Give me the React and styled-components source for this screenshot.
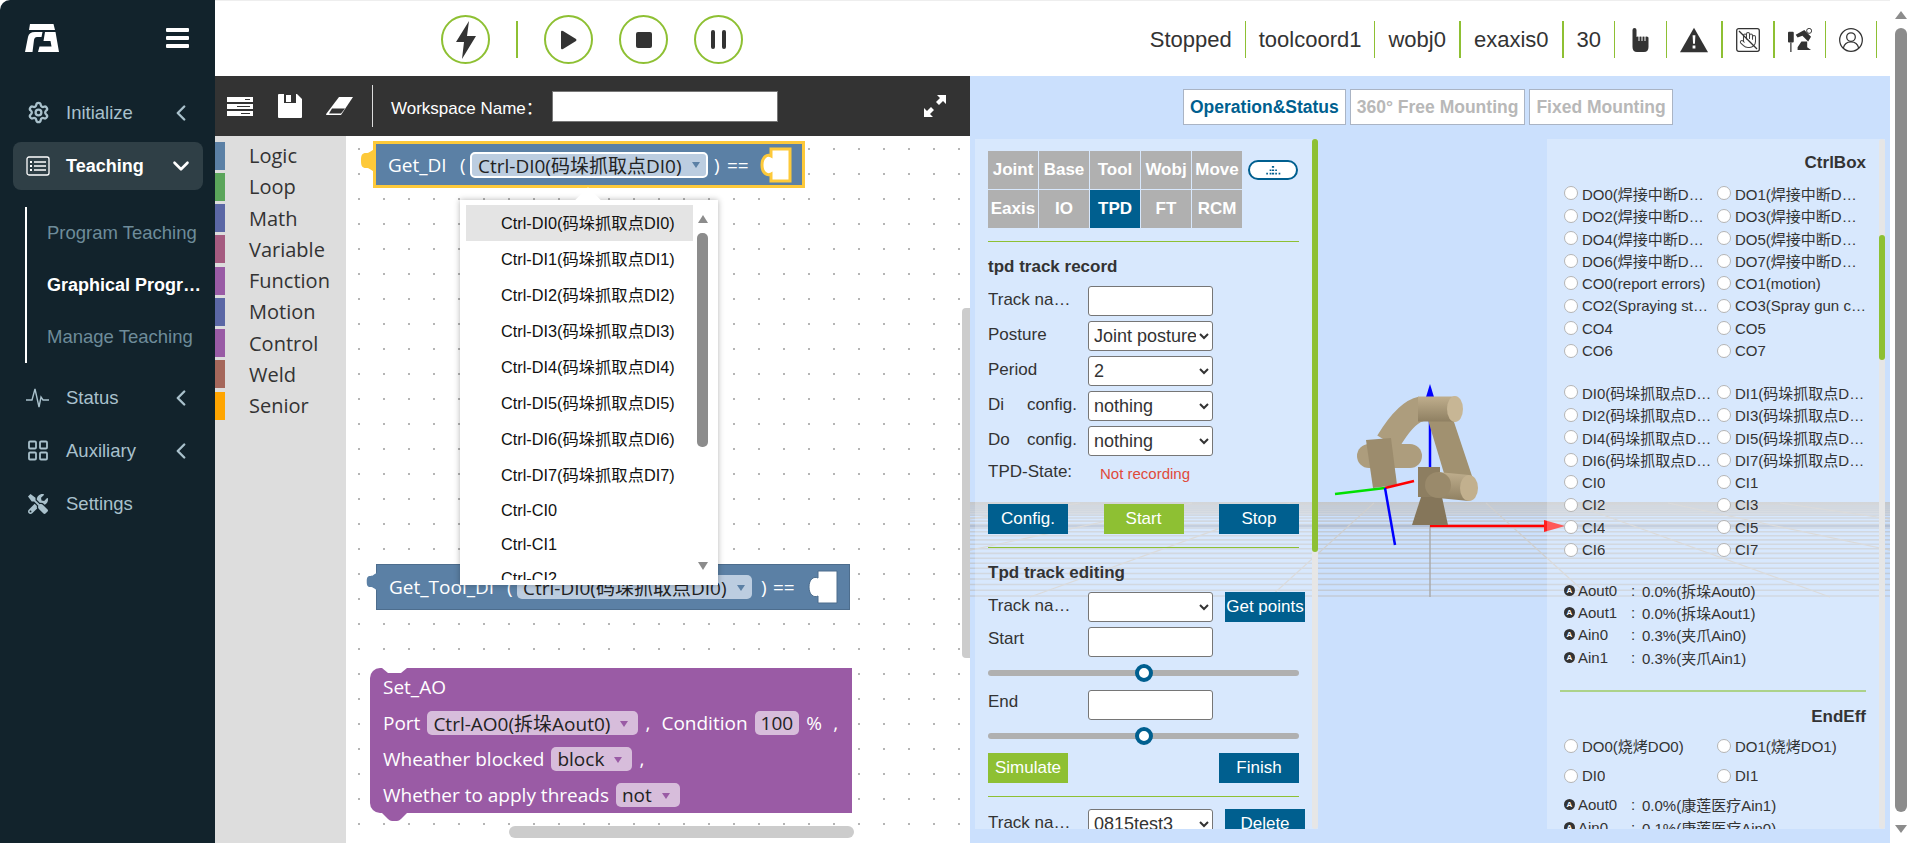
import React from "react";
import styled, { createGlobalStyle } from "styled-components";
import { Settings, ChevronLeft, ChevronDown, LayoutGrid, Hand } from "lucide-react";
import { FaTools } from "react-icons/fa";

const SANS = `"Liberation Sans", "Noto Sans CJK SC", sans-serif`;
const BLOCK = `"Open Sans", "Noto Sans CJK SC", sans-serif`;

const categories = [
  ["Logic", "#5b80a5"],
  ["Loop", "#5ba55b"],
  ["Math", "#5b67a5"],
  ["Variable", "#a55b80"],
  ["Function", "#995ba5"],
  ["Motion", "#5b67a5"],
  ["Control", "#995ba5"],
  ["Weld", "#a5675b"],
  ["Senior", "#ffa500"],
];

const dropdownItems = [
  ...[0, 1, 2, 3, 4, 5, 6, 7].map((n) => `Ctrl-DI${n}(码垛抓取点DI${n})`),
  "Ctrl-CI0",
  "Ctrl-CI1",
  "Ctrl-CI2",
];

const moveTabs = ["Joint", "Base", "Tool", "Wobj", "Move", "Eaxis", "IO", "TPD", "FT", "RCM"];

const outputs = [
  "DO0(焊接中断DO0)", "DO1(焊接中断DO1)", "DO2(焊接中断DO2)", "DO3(焊接中断DO3)",
  "DO4(焊接中断DO4)", "DO5(焊接中断DO5)", "DO6(焊接中断DO6)", "DO7(焊接中断DO7)",
  "CO0(report errors)", "CO1(motion)", "CO2(Spraying start)", "CO3(Spray gun clean)",
  "CO4", "CO5", "CO6", "CO7",
];

const inputs = [
  "DI0(码垛抓取点DI0)", "DI1(码垛抓取点DI1)", "DI2(码垛抓取点DI2)", "DI3(码垛抓取点DI3)",
  "DI4(码垛抓取点DI4)", "DI5(码垛抓取点DI5)", "DI6(码垛抓取点DI6)", "DI7(码垛抓取点DI7)",
  "CI0", "CI1", "CI2", "CI3", "CI4", "CI5", "CI6", "CI7",
];

const analogs = [
  ["Aout0", "0.0%(拆垛Aout0)"],
  ["Aout1", "0.0%(拆垛Aout1)"],
  ["Ain0", "0.3%(夹爪Ain0)"],
  ["Ain1", "0.3%(夹爪Ain1)"],
];

const floorLines = Array.from({ length: 24 }, (_, i) => 506 + 90 * Math.pow(i / 23, 1.5));
const floorRays = [-1400, -1000, -680, -400, -160, 160, 400, 680, 1000, 1400];

// labels get cut at different lengths in the reference
const labelWidth = (label) => {
  if (label.startsWith("DO")) return 126;
  if (label.startsWith("DI")) return 130;
  return 132;
};

const Logo = () => (
  <svg width="34" height="28" viewBox="0 0 34 28" fill="#fff">
    <path d="M5 0H28.5L30 6H4Z" />
    <path d="M0 28L3 13Q4 8 10 8H17.5L16.5 13H12Q9.5 13 9 16L7.5 28Z" />
    <path d="M20 8H30.5L34 28H13L14.5 22.5H26.5L25.5 17H18.5Z" />
  </svg>
);

const ListIcon = () => (
  <svg width="24" height="20" viewBox="0 0 24 20" fill="none" stroke="#fff" strokeWidth="1.3">
    <rect x="1" y="1" width="22" height="18" rx="2" />
    <path d="M8 6H20M8 10H20M8 14H20" />
    <path d="M4 6H6M4 10H6M4 14H6" strokeWidth="2" />
  </svg>
);

const Pulse = () => (
  <svg width="24" height="20" viewBox="0 0 24 20" fill="none" stroke="#a9c1cc" strokeWidth="1.4">
    <path d="M0 12H6L9 1L13 19L15 9L17 12H23" />
  </svg>
);

const Bolt = () => (
  <svg width="20" height="38" viewBox="0 0 20 38" fill="#333">
    <path d="M13 0L0 21H8L6 38L20 15H11Z" />
  </svg>
);

const HandOne = () => (
  <svg width="17" height="24" viewBox="0 0 17 24">
    <path
      fill="#333"
      d="M.5 2Q.5 0 2.5 0T4.5 2V9Q5.5 8 7 9 8.5 8 10 9 11.5 8 13 9 15 8 16.5 9.5V19Q16.5 24 12 24H5Q.5 24 .5 19Z"
    />
    <path stroke="#fff" d="M7 9V13M10 9V13M13 9V13" />
  </svg>
);

const Warning = () => (
  <svg width="29" height="26" viewBox="0 0 30 26">
    <path fill="#333" d="M15 0L30 26H0Z" />
    <path fill="#fff" d="M13.5 8H16.5L16 17H14ZM13.5 19H16.5V22H13.5Z" />
  </svg>
);

const NoHand = () => (
  <svg width="24" height="24" viewBox="0 0 24 24" fill="none">
    <rect x=".7" y=".7" width="22.6" height="22.6" rx="2" stroke="#333" strokeWidth="1.3" />
    <Hand x="3" y="3" width="18" height="18" stroke="#444" strokeWidth="1.4" />
    <path d="M3 3L21 21" stroke="#333" strokeWidth="1.2" />
  </svg>
);

const RobotIcon = () => (
  <svg width="24" height="24" viewBox="0 0 25 25" fill="#333">
    <rect x="0" y="4" width="6" height="11" rx="1" />
    <path d="M3 15V25" stroke="#333" strokeWidth="1.3" />
    <path d="M8 7L17 2 24 9 21 14 15 8 10 10Z" />
    <path d="M10 23V20L14 14H20V20L24 23Z" />
    <circle cx="22" cy="3" r="2.6" fill="#fff" stroke="#333" />
  </svg>
);

const UserIcon = () => (
  <svg width="24" height="24" viewBox="0 0 25 25" fill="none" stroke="#333" strokeWidth="1.3">
    <circle cx="12.5" cy="12.5" r="11.8" />
    <circle cx="12.5" cy="9.5" r="4.5" />
    <path d="M4.5 21Q6 14.5 12.5 14.5T20.5 21" />
  </svg>
);

const ServerIcon = () => (
  <svg width="26" height="19" viewBox="0 0 26 19">
    <path fill="#fff" d="M0 0H26V5H0ZM0 7H26V12H0ZM0 14H26V19H0Z" />
    <path stroke="#333" d="M18 2.5H23M10 9.5H23M14 16.5H23" />
  </svg>
);

const SaveIcon = () => (
  <svg width="24" height="24" viewBox="0 0 24 24">
    <path fill="#fff" d="M1 0H19L24 5V23Q24 24 23 24H1Q0 24 0 23V1Q0 0 1 0Z" />
    <path fill="#333" d="M6 0H18V9H6Z" />
    <path fill="#fff" d="M8 1H13V8H8Z" />
  </svg>
);

const EraserIcon = () => (
  <svg width="27" height="18" viewBox="0 0 27 18">
    <path fill="#fff" d="M13 0H27L15 18H1Q-.5 18 .5 16.5Z" />
    <path fill="#333" d="M6 11.5H19L15 16.5H3Z" />
  </svg>
);

const ExpandIcon = () => (
  <svg width="22" height="22" viewBox="0 0 22 22" fill="#fff">
    <path d="M13 0H22V9L19 6 15 10 12 7 16 3ZM0 22V13L3 16 7 12 10 15 6 19 9 22Z" />
  </svg>
);

const Tab = ({ color, width, height }) => (
  <svg width={width} height={height} viewBox="0 0 15 25">
    <path
      d="M15 1C10 3 10 5 6 5 2 5 1 7 1 12.5S2 20 6 20C10 20 10 22 15 24Z"
      fill={color}
    />
  </svg>
);

const Socket = ({ selected }) => (
  <svg width="32" height="36" viewBox="0 0 32 36">
    <path
      d="M11 2H30V34H11V27C7 29 2 26 2 18S7 7 11 9Z"
      fill="#fff"
      stroke={selected ? "#fdc93a" : "#4d6d8d"}
      strokeWidth={selected ? 3 : 1}
    />
  </svg>
);

const Scene = () => (
  <SceneSvg viewBox="970 76 920 767">
    <defs>
      <linearGradient id="arm" x1="0" y1="0" x2="0" y2="1">
        <stop offset="0" stopColor="#bfae8d" />
        <stop offset="1" stopColor="#8f8062" />
      </linearGradient>
      <linearGradient id="band" x1="0" y1="0" x2="0" y2="1">
        <stop offset="0" stopColor="#c4c7cb" />
        <stop offset="1" stopColor="#d0d5dc" />
      </linearGradient>
    </defs>
    <rect x="970" y="502" width="920" height="12" fill="url(#band)" />
    {floorLines.map((y) => (
      <line key={y} x1="970" x2="1890" y1={y} y2={y} stroke="#c3cbd6" strokeWidth="1.6" />
    ))}
    <line x1="970" x2="1890" y1="526" y2="526" stroke="#a9b5c8" strokeWidth="1.6" />
    {floorRays.map((dx) => (
      <line key={dx} x1={1430 + dx * 0.35} y1="503" x2={1430 + dx} y2="597" stroke="#cfcfcf" strokeWidth="1.2" />
    ))}
    <line x1="1430" x2="1430" y1="503" y2="597" stroke="#a8a8a8" strokeWidth="1.4" />

    <line x1="1430" y1="395" x2="1430" y2="470" stroke="#0000ff" strokeWidth="2.5" />
    <path d="M1430 384L1434 397H1426Z" fill="#0000ff" />
    <line x1="1430" y1="526" x2="1548" y2="526" stroke="#ff0000" strokeWidth="2.5" />
    <path d="M1544 520L1565 526 1544 532Z" fill="#ff2020" />

    <path d="M1428 420L1452 416 1474 482 1449 490Z" fill="#a19170" />
    <path d="M1412 525L1421 497H1442L1448 525Z" fill="#85765a" />
    <path d="M1418 467H1440V497H1418Z" fill="#8d7e61" />
    <path d="M1438 472L1469 475V501L1438 498Z" fill="url(#arm)" />
    <circle cx="1438" cy="485" r="13" fill="#9a8a6b" />
    <ellipse cx="1469" cy="488" rx="9" ry="13" fill="#c2b08e" />
    <path d="M1421 409Q1406 412 1388 442" fill="none" stroke="#ad9d7d" strokeWidth="25" />
    <path d="M1418 396.5H1455V421.5H1418Z" fill="url(#arm)" />
    <ellipse cx="1455" cy="409" rx="8" ry="13" fill="#c7b695" />
    <line x1="1369" y1="456" x2="1410" y2="456" stroke="#ad9d7d" strokeWidth="24" strokeLinecap="round" />
    <path d="M1366 440L1391 438 1397 485 1373 488Z" fill="#9c8c6d" />

    <line x1="1385" y1="488" x2="1414" y2="481" stroke="#ff0000" strokeWidth="2.5" />
    <line x1="1385" y1="488" x2="1335" y2="494" stroke="#00e000" strokeWidth="2.5" />
    <line x1="1385" y1="488" x2="1395" y2="545" stroke="#0000ff" strokeWidth="2.5" />
  </SceneSvg>
);

const RadioGrid = ({ labels }) => (
  <Radios>
    {labels.map((label) => (
      <RadioItem key={label}>
        <Radio type="radio" name={label} />
        <RadioText $max={labelWidth(label)}>{label}</RadioText>
      </RadioItem>
    ))}
  </Radios>
);

const AnalogRow = ({ name, value }) => (
  <Analog>
    <AnalogBadge>A</AnalogBadge>
    <AnalogName>{name}</AnalogName>
    <AnalogColon>:</AnalogColon>
    {value}
  </Analog>
);

const FormRow = ({ label, justify, raised, children }) => (
  <Row>
    <RowLabel $justify={justify} $raised={raised}>
      {label}
    </RowLabel>
    {children}
  </Row>
);

const Slider = () => (
  <SliderTrack>
    <SliderThumb />
  </SliderTrack>
);

const App = () => {
  return (
    <Page>
      <GlobalStyle />
      <Sidebar>
        <Brand>
          <Logo />
          <Burger>
            <i />
            <i />
            <i />
          </Burger>
        </Brand>
        <NavItem>
          <NavIcon>
            <Settings size={23} strokeWidth={2.4} />
          </NavIcon>
          <NavText>Initialize</NavText>
          <ChevronLeft size={26} strokeWidth={2.2} />
        </NavItem>
        <NavItem $active>
          <NavIcon>
            <ListIcon />
          </NavIcon>
          <NavText>Teaching</NavText>
          <ChevronDown size={26} strokeWidth={2.4} />
        </NavItem>
        <SubNav>
          <SubItem>Program Teaching</SubItem>
          <SubItem $active>Graphical Programming</SubItem>
          <SubItem>Manage Teaching</SubItem>
        </SubNav>
        <NavItem>
          <NavIcon>
            <Pulse />
          </NavIcon>
          <NavText>Status</NavText>
          <ChevronLeft size={26} strokeWidth={2.2} />
        </NavItem>
        <NavItem>
          <NavIcon>
            <LayoutGrid size={25} strokeWidth={1.8} />
          </NavIcon>
          <NavText>Auxiliary</NavText>
          <ChevronLeft size={26} strokeWidth={2.2} />
        </NavItem>
        <NavItem>
          <NavIcon>
            <FaTools size={20} />
          </NavIcon>
          <NavText>Settings</NavText>
        </NavItem>
      </Sidebar>

      <Main>
        <TopBar>
          <RoundButton>
            <Bolt />
          </RoundButton>
          <TopDivider />
          <RoundButton>
            <svg width="16" height="20" viewBox="0 0 16 20" fill="#333">
              <path d="M0 2Q0 0 2 1L15 9Q16 10 15 11L2 19Q0 20 0 18Z" />
            </svg>
          </RoundButton>
          <RoundButton>
            <StopSquare />
          </RoundButton>
          <RoundButton>
            <PauseBars>
              <i />
              <i />
            </PauseBars>
          </RoundButton>
          <StatusGroup>
            <StatusItem>Stopped</StatusItem>
            <StatusItem>toolcoord1</StatusItem>
            <StatusItem $thick>wobj0</StatusItem>
            <StatusItem $thick>exaxis0</StatusItem>
            <StatusItem>30</StatusItem>
            <StatusItem>
              <IconSlot $width={25}>
                <HandOne />
              </IconSlot>
            </StatusItem>
            <StatusItem $thick>
              <IconSlot $width={28}>
                <Warning />
              </IconSlot>
            </StatusItem>
            <StatusItem $thick>
              <IconSlot $width={24}>
                <NoHand />
              </IconSlot>
            </StatusItem>
            <StatusItem>
              <IconSlot $width={24}>
                <RobotIcon />
              </IconSlot>
            </StatusItem>
            <StatusItem>
              <IconSlot $width={24}>
                <UserIcon />
              </IconSlot>
            </StatusItem>
          </StatusGroup>
        </TopBar>

        <Content>
          <Editor>
            <EditorBar>
              <BarIcon $gap={25}>
                <ServerIcon />
              </BarIcon>
              <BarIcon $gap={24}>
                <SaveIcon />
              </BarIcon>
              <BarIcon $gap={19}>
                <EraserIcon />
              </BarIcon>
              <BarDivider />
              <BarLabel>Workspace Name：</BarLabel>
              <BarInput />
              <ExpandSlot>
                <ExpandIcon />
              </ExpandSlot>
            </EditorBar>
            <EditorBody>
              <CategoryList>
                {categories.map(([name, color]) => (
                  <CategoryRow key={name}>
                    <CategoryTab $color={color} />
                    {name}
                  </CategoryRow>
                ))}
              </CategoryList>
              <Canvas>
                <LineBlock $x={27} $y={5} $width={432} $height={47} $selected>
                  <BlockTab $left={-16} $top={4}>
                    <Tab color="#fdc93a" width={15} height={25} />
                  </BlockTab>
                  <BlockText $width={72}>Get_DI</BlockText>
                  <BlockText $width={10}>(</BlockText>
                  <Field $color="#bccde0" $width={238} $selected>
                    Ctrl-DI0(码垛抓取点DI0)
                    <Caret $color="#5b80a5" />
                  </Field>
                  <BlockText $width={19} $inset={6}>)</BlockText>
                  <BlockText $width={33}>==</BlockText>
                  <Socket selected />
                </LineBlock>

                <LineBlock $x={30} $y={428} $width={474} $height={46}>
                  <BlockTab $left={-11} $top={7}>
                    <Tab color="#5b80a5" width={11} height={19} />
                  </BlockTab>
                  <BlockText $width={118}>Get_Tool_DI</BlockText>
                  <BlockText $width={10}>(</BlockText>
                  <Field $color="#bccde0" $width={235}>
                    Ctrl-DI0(码垛抓取点DI0)
                    <Caret $color="#5b80a5" />
                  </Field>
                  <BlockText $width={21} $inset={9}>)</BlockText>
                  <BlockText $width={34}>==</BlockText>
                  <Socket />
                </LineBlock>

                <StackBlock>
                  <TopNotch viewBox="0 0 25 5">
                    <path d="M0 0L6 5H19L25 0Z" fill="#fff" />
                  </TopNotch>
                  <BlockRow>Set_AO</BlockRow>
                  <BlockRow>
                    Port
                    <Field $color="#d7bddb" $compact>
                      Ctrl-AO0(拆垛Aout0)
                      <Caret $color="#9a5ba5" />
                    </Field>
                    <Comma>,</Comma>
                    Condition
                    <Field $color="#d7bddb" $compact>100</Field>
                    <Comma $wide>%</Comma>
                    <Comma>,</Comma>
                  </BlockRow>
                  <BlockRow>
                    Wheather blocked
                    <Field $color="#d7bddb" $compact>
                      block
                      <Caret $color="#9a5ba5" />
                    </Field>
                    <Comma>,</Comma>
                  </BlockRow>
                  <BlockRow>
                    Whether to apply threads
                    <Field $color="#d7bddb" $compact>
                      not
                      <Caret $color="#9a5ba5" />
                    </Field>
                  </BlockRow>
                  <BottomBump viewBox="0 0 25 8">
                    <path d="M0 0L6 6Q8 8 10 8H15Q17 8 19 6L25 0Z" fill="#9a5ba5" />
                  </BottomBump>
                </StackBlock>

                <Dropdown>
                  <DropdownNotch />
                  <DropdownList>
                    {dropdownItems.map((item, i) => (
                      <DropdownItem key={item} $active={i === 0} $short={i > 7}>
                        {item}
                      </DropdownItem>
                    ))}
                  </DropdownList>
                  <DropdownScroll>
                    <ArrowUp />
                    <DropdownThumb />
                    <ArrowDown />
                  </DropdownScroll>
                </Dropdown>

                <CanvasThumbH />
                <CanvasThumbV />
              </Canvas>
            </EditorBody>
          </Editor>

          <Viewer>
            <Scene />
            <ViewTabs>
              <ViewTab $active>Operation&amp;Status</ViewTab>
              <ViewTab>360° Free Mounting</ViewTab>
              <ViewTab>Fixed Mounting</ViewTab>
            </ViewTabs>
            <Panels>
              <LeftPanel>
                <PanelScroll $top={0} $height={413} />
                <TabGridRow>
                  <TabGrid>
                    {moveTabs.map((t) => (
                      <TabCell key={t} $active={t === "TPD"}>
                        {t}
                      </TabCell>
                    ))}
                  </TabGrid>
                  <TogglePill>
                    <svg width="16" height="9" viewBox="0 0 14 8" fill="#005f8f">
                      <path d="M6 0h2v1.500H6zM4 3h1.500v1.500H4zM6 3h2v1.500H6zM9 3h1.500v1.500H9zM1 6h1.500v1.500H1zM4 6h1.500v1.500H4zM6 6h2v1.500H6zM9 6h1.500v1.500H9zM12 6h1.500v1.500H12z" />
                    </svg>
                  </TogglePill>
                </TabGridRow>
                <GreenRule $top={13} />
                <Heading>tpd track record</Heading>
                <Rows>
                  <FormRow label="Track name">
                    <Input />
                  </FormRow>
                  <FormRow label="Posture">
                    <Select defaultValue="Joint posture">
                      <option>Joint posture</option>
                    </Select>
                  </FormRow>
                  <FormRow label="Period">
                    <Select defaultValue="2">
                      <option>2</option>
                    </Select>
                  </FormRow>
                  <FormRow label="Di config." justify>
                    <Select defaultValue="nothing">
                      <option>nothing</option>
                    </Select>
                  </FormRow>
                  <FormRow label="Do config." justify>
                    <Select defaultValue="nothing">
                      <option>nothing</option>
                    </Select>
                  </FormRow>
                </Rows>
                <StateRow>
                  <RowLabel>TPD-State:</RowLabel>
                  <StateValue>Not recording</StateValue>
                </StateRow>
                <ButtonRow $top={21}>
                  <Button>Config.</Button>
                  <Button $green>Start</Button>
                  <Button>Stop</Button>
                </ButtonRow>
                <GreenRule $top={13} />
                <Heading>Tpd track editing</Heading>
                <Rows>
                  <FormRow label="Track name">
                    <Select />
                    <SideButton>Get points</SideButton>
                  </FormRow>
                  <FormRow label="Start" raised>
                    <Input />
                  </FormRow>
                </Rows>
                <Slider />
                <FormRow label="End" raised>
                  <Input />
                </FormRow>
                <Slider />
                <ButtonRow $top={9}>
                  <Button $green>Simulate</Button>
                  <Button>Finish</Button>
                </ButtonRow>
                <GreenRule $top={13} />
                <Rows $top={12}>
                  <FormRow label="Track name">
                    <Select defaultValue="0815test3">
                      <option>0815test3</option>
                    </Select>
                    <SideButton>Delete</SideButton>
                  </FormRow>
                </Rows>
              </LeftPanel>

              <RightPanel>
                <PanelScroll $top={96} $height={125} />
                <SideHeading>CtrlBox</SideHeading>
                <RadioGrid labels={outputs} />
                <Spacer $height={19} />
                <RadioGrid labels={inputs} />
                <Spacer $height={18} />
                {analogs.map(([name, value]) => (
                  <AnalogRow key={name} name={name} value={value} />
                ))}
                <SideRule />
                <SideHeading>EndEff</SideHeading>
                <TallRadios>
                  {["DO0(烧烤DO0)", "DO1(烧烤DO1)", "DI0", "DI1"].map((label) => (
                    <RadioItem key={label}>
                      <Radio type="radio" name={label} />
                      <RadioText $max={labelWidth(label)}>{label}</RadioText>
                    </RadioItem>
                  ))}
                </TallRadios>
                <AnalogRow name="Aout0" value="0.0%(康莲医疗Ain1)" />
                <AnalogRow name="Ain0" value="0.1%(康莲医疗Ain0)" />
              </RightPanel>
            </Panels>
          </Viewer>
        </Content>
      </Main>

      <PageScroll>
        <PageArrowUp />
        <PageThumb />
        <PageArrowDown />
      </PageScroll>
    </Page>
  );
};

export default App;

const GlobalStyle = createGlobalStyle`
  html, body {
    margin: 0;
    height: 100%;
    overflow: hidden;
    background: #fff;
    font-family: ${SANS};
  }
  * {
    box-sizing: border-box;
  }
`;

const Page = styled.div`
  display: flex;
  width: 1910px;
  height: 843px;
  overflow: hidden;
`;

const Sidebar = styled.aside`
  flex: 0 0 215px;
  background: #12232c;
  border-top-left-radius: 10px;
  color: #a9c1cc;
`;

const Brand = styled.div`
  display: flex;
  justify-content: space-between;
  align-items: center;
  height: 86px;
  padding: 0 26px 10px 25px;
`;

const Burger = styled.div`
  display: flex;
  flex-direction: column;
  gap: 4px;

  i {
    display: block;
    width: 23px;
    height: 4px;
    border-radius: 1px;
    background: #fff;
  }
`;

const NavItem = styled.div`
  display: flex;
  align-items: center;
  height: ${(p) => (p.$active ? "48px" : "53px")};
  margin: ${(p) => (p.$active ? "3px 12px 0 13px" : "0 12px 0 13px")};
  padding: 0 9px 0 13px;
  border-radius: 8px;
  font-size: ${(p) => (p.$active ? "18px" : "18.5px")};
  font-weight: ${(p) => (p.$active ? 700 : 400)};
  color: ${(p) => (p.$active ? "#fff" : "#a9c1cc")};
  background: ${(p) => (p.$active ? "#2f3f46" : "transparent")};
`;

const NavIcon = styled.span`
  display: flex;
  justify-content: center;
  flex: none;
  width: 24px;
  margin-right: 16px;
`;

const NavText = styled.span`
  flex: 1;
`;

const SubNav = styled.div`
  width: 184px;
  height: 156px;
  margin: 17px 0 8px 25px;
  padding-left: 20px;
  border-left: 2px solid #fff;
`;

const SubItem = styled.div`
  height: 52px;
  line-height: 52px;
  font-size: ${(p) => (p.$active ? "18px" : "18.5px")};
  white-space: nowrap;
  overflow: hidden;
  text-overflow: ellipsis;
  font-weight: ${(p) => (p.$active ? 700 : 400)};
  color: ${(p) => (p.$active ? "#fff" : "#6e8c9a")};
`;

const Main = styled.div`
  display: flex;
  flex-direction: column;
  width: 1675px;
`;

const TopBar = styled.header`
  display: flex;
  align-items: center;
  flex: 0 0 76px;
  padding: 2px 13px 0 226px;
  border-top: 1px solid #eee;
  gap: 26px;
`;

const RoundButton = styled.div`
  display: flex;
  justify-content: center;
  align-items: center;
  width: 49px;
  height: 49px;
  border: 2.5px solid #8ec033;
  border-radius: 50%;
`;

const TopDivider = styled.div`
  width: 2px;
  height: 37px;
  background: #8ec033;
`;

const StopSquare = styled.div`
  width: 16px;
  height: 16px;
  border-radius: 2px;
  background: #333;
`;

const PauseBars = styled.div`
  display: flex;
  gap: 7px;

  i {
    width: 4px;
    height: 19px;
    border-radius: 2px;
    background: #333;
  }
`;

const StatusGroup = styled.div`
  display: flex;
  align-items: center;
  margin-left: auto;
  color: #333;
  font-size: 22px;
`;

const StatusItem = styled.div`
  display: flex;
  align-items: center;
  height: 37px;
  padding: 0 13px;
  border-right: ${(p) => (p.$thick ? "2px" : "1px")} solid #8ec033;
  white-space: nowrap;
`;

const IconSlot = styled.span`
  display: flex;
  justify-content: center;
  width: ${(p) => p.$width}px;
`;

const Content = styled.div`
  display: flex;
  flex: 1;
  min-height: 0;
`;

const Editor = styled.section`
  display: flex;
  flex-direction: column;
  flex: 0 0 755px;
`;

const EditorBar = styled.div`
  display: flex;
  align-items: center;
  flex: 0 0 60px;
  padding-left: 12px;
  background: #333;
  color: #fff;
`;

const BarIcon = styled.span`
  display: flex;
  margin-right: ${(p) => p.$gap}px;
`;

const BarDivider = styled.div`
  width: 1px;
  height: 42px;
  background: #ddd;
`;

const BarLabel = styled.span`
  width: 161px;
  margin-left: 18px;
  font-size: 17px;
  white-space: nowrap;
`;

const BarInput = styled.input`
  width: 226px;
  height: 31px;
  border: 1px solid #777;
  background: #fff;
`;

const ExpandSlot = styled.span`
  display: flex;
  margin-left: auto;
  margin-right: 24px;
`;

const EditorBody = styled.div`
  display: flex;
  flex: 1;
  min-height: 0;
`;

const CategoryList = styled.nav`
  flex: 0 0 131px;
  padding-top: 4px;
  background: #ddd;
`;

const CategoryRow = styled.div`
  display: flex;
  align-items: center;
  height: 31.25px;
  font-family: ${BLOCK};
  font-size: 20px;
  color: #333;
`;

const CategoryTab = styled.span`
  width: 10px;
  height: 28px;
  margin-right: 24px;
  background: ${(p) => p.$color};
`;

const Canvas = styled.div`
  position: relative;
  flex: 1;
  overflow: hidden;
  background-color: #fff;
  background-image: radial-gradient(circle at 1px 1px, #b5b5b5 1px, transparent 1.2px);
  background-size: 25px 25px;
  background-position: 12px 12px;
`;

const LineBlock = styled.div`
  position: absolute;
  left: ${(p) => p.$x}px;
  top: ${(p) => p.$y}px;
  width: ${(p) => p.$width}px;
  height: ${(p) => p.$height}px;
  display: flex;
  align-items: center;
  padding-left: 12px;
  background: #5b80a5;
  border: ${(p) => (p.$selected ? "3px solid #fdc93a" : "1px solid #4d6d8d")};
  color: #fff;
  font-family: ${BLOCK};
  font-size: 19px;

  > svg {
    flex: none;
  }
`;

const BlockTab = styled.span`
  position: absolute;
  left: ${(p) => p.$left}px;
  top: ${(p) => p.$top}px;
  display: flex;
`;

const BlockText = styled.span`
  flex: none;
  width: ${(p) => p.$width}px;
  padding-left: ${(p) => p.$inset || 0}px;
  white-space: nowrap;
`;

const Field = styled.span`
  display: inline-flex;
  align-items: center;
  justify-content: space-between;
  flex: none;
  width: ${(p) => (p.$width ? `${p.$width}px` : "auto")};
  height: ${(p) => (p.$selected ? "26px" : "24px")};
  margin: ${(p) => (p.$compact ? "0 7px" : "0")};
  padding: 0 6px;
  border: ${(p) => (p.$selected ? "2px solid #fff" : "none")};
  border-radius: 5px;
  background: ${(p) => p.$color};
  color: #222;
  font-family: ${BLOCK};
  font-size: 19px;
  white-space: nowrap;
`;

const Caret = styled.i`
  width: 0;
  height: 0;
  margin: 1px 4px 0 10px;
  border-left: 4px solid transparent;
  border-right: 4px solid transparent;
  border-top: 6px solid ${(p) => p.$color};
`;

const StackBlock = styled.div`
  position: absolute;
  left: 24px;
  top: 532px;
  width: 482px;
  height: 145px;
  padding: 1px 0 0 13px;
  background: #9a5ba5;
  border-radius: 10px 0 0 10px;
  color: #fff;
  font-family: ${BLOCK};
  font-size: 19px;
`;

const BlockRow = styled.div`
  display: flex;
  align-items: center;
  height: 36px;
  white-space: nowrap;
`;

const Comma = styled.span`
  width: ${(p) => (p.$wide ? "27px" : "16px")};
`;

const TopNotch = styled.svg`
  position: absolute;
  left: 12px;
  top: 0;
  width: 25px;
  height: 5px;
`;

const BottomBump = styled.svg`
  position: absolute;
  left: 12px;
  bottom: -8px;
  width: 25px;
  height: 8px;
`;

const Dropdown = styled.div`
  position: absolute;
  left: 114px;
  top: 64px;
  width: 258px;
  height: 385px;
  display: flex;
  padding: 5px 10px 5px 6px;
  background: #fff;
  box-shadow: 0 0 6px rgba(0, 0, 0, 0.3);
`;

const DropdownNotch = styled.span`
  position: absolute;
  left: 119px;
  top: -9px;
  width: 18px;
  height: 18px;
  background: #fff;
  transform: rotate(45deg);
`;

const DropdownList = styled.div`
  position: relative;
  width: 227px;
  overflow: hidden;
`;

const DropdownItem = styled.div`
  height: ${(p) => (p.$short ? "34px" : "36px")};
  line-height: ${(p) => (p.$short ? "34px" : "36px")};
  padding-left: 35px;
  background: ${(p) => (p.$active ? "#e4e4e4" : "transparent")};
  color: #111;
  font-size: 16.3px;
  white-space: nowrap;
`;

const DropdownScroll = styled.div`
  display: flex;
  flex-direction: column;
  align-items: center;
  width: 11px;
  margin-left: 4px;
  padding-top: 10px;
`;

const ArrowUp = styled.i`
  width: 0;
  height: 0;
  border-left: 5.5px solid transparent;
  border-right: 5.5px solid transparent;
  border-bottom: 8px solid #8c8c8c;
`;

const ArrowDown = styled.i`
  width: 0;
  height: 0;
  margin-top: 115px;
  border-left: 5.5px solid transparent;
  border-right: 5.5px solid transparent;
  border-top: 8px solid #8c8c8c;
`;

const DropdownThumb = styled.div`
  width: 11px;
  height: 214px;
  margin-top: 10px;
  border-radius: 5px;
  background: #8c8c8c;
`;

const CanvasThumbH = styled.div`
  position: absolute;
  left: 163px;
  bottom: 5px;
  width: 345px;
  height: 12px;
  border-radius: 6px;
  background: #ccc;
`;

const CanvasThumbV = styled.div`
  position: absolute;
  right: 0;
  top: 172px;
  width: 8px;
  height: 350px;
  border-radius: 4px 0 0 4px;
  background: #ccc;
`;

const Viewer = styled.section`
  position: relative;
  display: flex;
  flex-direction: column;
  width: 920px;
  padding-top: 13px;
  background: #cbe0fd;
  overflow: hidden;
`;

const SceneSvg = styled.svg`
  position: absolute;
  inset: 0;
  width: 100%;
  height: 100%;
`;

const ViewTabs = styled.div`
  position: relative;
  display: flex;
  gap: 4px;
  margin-left: 213px;
`;

const ViewTab = styled.div`
  height: 36px;
  line-height: 34px;
  padding: 0 6px;
  border: 1px solid #aab4c4;
  background: #fff;
  font-size: 17.5px;
  font-weight: 700;
  white-space: nowrap;
  color: ${(p) => (p.$active ? "#005f8f" : "#b8b8b8")};
`;

const Panels = styled.div`
  position: relative;
  display: flex;
  justify-content: space-between;
  height: 690px;
  margin-top: 14px;
  padding: 0 5px;
  color: #333;
`;

const LeftPanel = styled.div`
  position: relative;
  width: 343px;
  padding: 12px 19px 0 13px;
  background: rgba(255, 255, 255, 0.25);
  overflow: hidden;
  font-size: 17px;
`;

const RightPanel = styled.div`
  position: relative;
  width: 338px;
  padding: 14px 19px 0 17px;
  background: rgba(255, 255, 255, 0.25);
  overflow: hidden;
  font-size: 15px;
`;

const PanelScroll = styled.div`
  position: absolute;
  top: 0;
  right: 0;
  width: 6px;
  height: 100%;
  border-radius: 3px;
  background: #e6e6e6;

  &::after {
    content: "";
    position: absolute;
    left: 0;
    top: ${(p) => p.$top}px;
    width: 6px;
    height: ${(p) => p.$height}px;
    border-radius: 3px;
    background: #8ec033;
  }
`;

const TabGridRow = styled.div`
  display: flex;
  align-items: flex-start;
  gap: 6px;
`;

const TabGrid = styled.div`
  display: grid;
  grid-template-columns: repeat(5, 50px);
  grid-auto-rows: 38px;
  gap: 1px;
`;

const TabCell = styled.div`
  display: flex;
  justify-content: center;
  align-items: center;
  background: ${(p) => (p.$active ? "#005f8f" : "#b0b0b0")};
  color: #fff;
  font-size: 17px;
  font-weight: 700;
`;

const TogglePill = styled.div`
  display: flex;
  justify-content: center;
  align-items: center;
  width: 50px;
  height: 20px;
  margin-top: 9px;
  border: 2px solid #005f8f;
  border-radius: 10px;
  background: #fff;
`;

const GreenRule = styled.div`
  width: 311px;
  height: 1px;
  margin-top: ${(p) => p.$top}px;
  background: #8ec033;
`;

const Heading = styled.div`
  height: 20px;
  line-height: 20px;
  margin: 15px 0 9px;
  font-size: 17px;
  font-weight: 700;
`;

const Rows = styled.div`
  display: flex;
  flex-direction: column;
  gap: 5px;
  margin-top: ${(p) => p.$top || 0}px;
`;

const Row = styled.div`
  display: flex;
  align-items: center;
  height: 30px;
`;

const RowLabel = styled.span`
  width: 89px;
  margin-right: 11px;
  margin-bottom: ${(p) => (p.$raised ? "4px" : "0")};
  flex: none;
  white-space: ${(p) => (p.$justify ? "normal" : "nowrap")};
  overflow: hidden;
  text-overflow: ellipsis;
  text-align: ${(p) => (p.$justify ? "justify" : "left")};
  text-align-last: ${(p) => (p.$justify ? "justify" : "left")};
  height: 22px;
  line-height: 20px;
`;

const Input = styled.input`
  flex: none;
  width: 125px;
  height: 30px;
  border: 1px solid #767676;
  border-radius: 3px;
  background: #fff;
`;

const Select = styled.select`
  flex: none;
  width: 125px;
  height: 30px;
  padding-left: 1px;
  border: 1px solid #767676;
  border-radius: 3px;
  background: #fff;
  color: #333;
  font-family: ${SANS};
  font-size: 18px;
`;

const StateRow = styled.div`
  display: flex;
  align-items: center;
  height: 20px;
  margin-top: 7px;
`;

const StateValue = styled.span`
  margin-left: 1px;
  padding-left: 11px;
  color: #e04a3a;
  font-size: 15px;
`;

const ButtonRow = styled.div`
  display: flex;
  justify-content: space-between;
  width: 311px;
  margin-top: ${(p) => p.$top}px;
`;

const Button = styled.div`
  width: 80px;
  height: 30px;
  line-height: 30px;
  text-align: center;
  color: #fff;
  font-size: 17px;
  background: ${(p) => (p.$green ? "#8ec033" : "#005f8f")};
`;

const SideButton = styled(Button)`
  margin-left: 12px;
  flex: none;
  white-space: nowrap;
  background: #005f8f;
`;

const SliderTrack = styled.div`
  position: relative;
  width: 311px;
  height: 6px;
  margin: 13px 0 14px;
  border-radius: 3px;
  background: #b0b0b0;
`;

const SliderThumb = styled.span`
  position: absolute;
  left: 50%;
  top: 50%;
  width: 18px;
  height: 18px;
  border: 4px solid #005f8f;
  border-radius: 50%;
  background: #fff;
  transform: translate(-50%, -50%);
`;

const SideHeading = styled.div`
  height: 20px;
  line-height: 20px;
  margin-bottom: 9px;
  text-align: right;
  font-size: 17px;
  font-weight: 700;
`;

const Radios = styled.div`
  display: grid;
  grid-template-columns: 153px 153px;
  grid-auto-rows: 22.5px;
`;

const TallRadios = styled(Radios)`
  grid-auto-rows: 30px;
  margin: -5px 0 3px;
`;

const RadioItem = styled.label`
  display: flex;
  align-items: center;
  min-width: 0;
`;

const Radio = styled.input`
  flex: none;
  appearance: none;
  width: 14px;
  height: 14px;
  margin: 0 4px 0 0;
  border: 1px solid #b5b5b5;
  border-radius: 50%;
  background: #fff;
`;

const RadioText = styled.span`
  max-width: ${(p) => p.$max}px;
  overflow: hidden;
  text-overflow: ellipsis;
  white-space: nowrap;
`;

const Spacer = styled.div`
  height: ${(p) => p.$height}px;
`;

const Analog = styled.div`
  display: flex;
  align-items: center;
  height: 22.4px;
  white-space: nowrap;
`;

const AnalogBadge = styled.span`
  flex: none;
  width: 11px;
  height: 11px;
  margin-right: 3px;
  border-radius: 50%;
  background: #333;
  color: #fff;
  font-size: 8px;
  font-weight: 700;
  line-height: 11px;
  text-align: center;
`;

const AnalogName = styled.span`
  width: 53px;
`;

const AnalogColon = styled.span`
  width: 11px;
`;

const SideRule = styled.div`
  height: 2px;
  width: 306px;
  margin: 21px 0 15px -4px;
  background: #acd28a;
`;

const PageScroll = styled.div`
  position: relative;
  display: flex;
  flex-direction: column;
  align-items: center;
  flex: 0 0 20px;
  padding: 11px 3px 0 5px;
  background: #fff;
`;

const PageThumb = styled.div`
  width: 12px;
  height: 784px;
  margin-top: 9px;
  border-radius: 6px;
  background: #8c8c8c;
`;

const PageArrowUp = styled.i`
  width: 0;
  height: 0;
  border-left: 6px solid transparent;
  border-right: 6px solid transparent;
  border-bottom: 8px solid #8c8c8c;
`;

const PageArrowDown = styled.i`
  width: 0;
  height: 0;
  margin-top: 13px;
  border-left: 6px solid transparent;
  border-right: 6px solid transparent;
  border-top: 8px solid #8c8c8c;
`;
